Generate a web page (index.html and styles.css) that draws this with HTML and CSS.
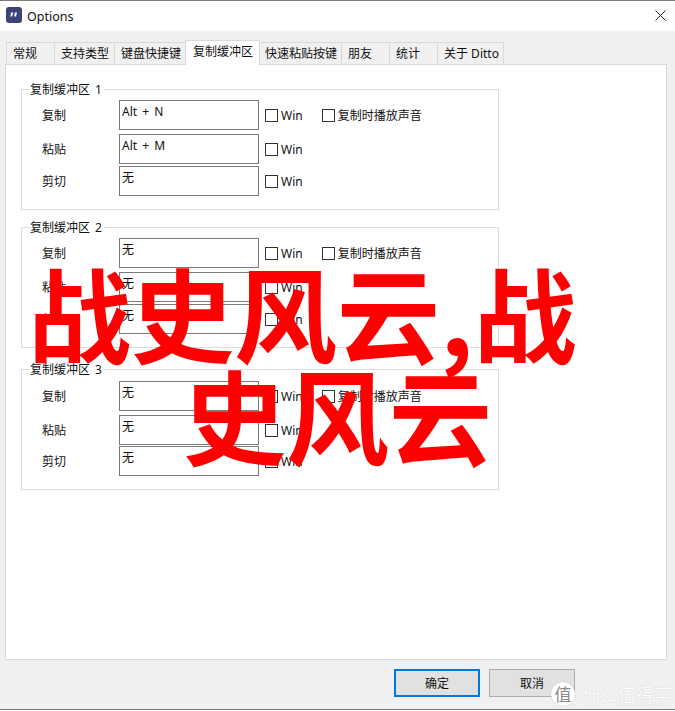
FILE: index.html
```html
<!DOCTYPE html>
<html lang="zh-CN">
<head>
    <meta charset="UTF-8">
    <meta name="viewport" content="width=device-width, initial-scale=1.0">
    <title>Options</title>
    <link rel="stylesheet" href="styles.css">
</head>
<body>
    <div class="window">
        <div class="titlebar">
            <svg class="app-icon" width="16" height="16" viewBox="0 0 16 16">
                <rect width="16" height="16" rx="3" fill="#3b4477"/>
                <path d="M5 5.5h2.2L6.2 9.5H4.4zM8.8 5.5H11L10 9.5H8.2z" fill="#fff"/>
            </svg>
            <span class="title">Options</span>
            <svg class="close" width="11" height="11" viewBox="0 0 11 11">
                <path d="M.5.5l10 10M10.5.5l-10 10" stroke="#222" stroke-width="1" fill="none"/>
            </svg>
        </div>

        <div class="body">
            <div class="tabs">
                <div class="tab tab-w48">常规</div>
                <div class="tab tab-w60">支持类型</div>
                <div class="tab tab-w71">键盘快捷键</div>
                <div class="tab tab-w75 active">复制缓冲区</div>
                <div class="tab tab-w82">快速粘贴按键</div>
                <div class="tab tab-w48">朋友</div>
                <div class="tab tab-w48">统计</div>
                <div class="tab tab-w67">关于 Ditto</div>
            </div>

            <div class="panel">
                <fieldset class="group">
                    <legend>复制缓冲区 1</legend>
                    <div class="row">
                        <span class="row-label">复制</span>
                        <div class="hotkey">Alt + N</div>
                        <label class="check"><i class="box"></i>Win</label>
                        <label class="check sound"><i class="box"></i>复制时播放声音</label>
                    </div>
                    <div class="row">
                        <span class="row-label">粘贴</span>
                        <div class="hotkey">Alt + M</div>
                        <label class="check"><i class="box"></i>Win</label>
                    </div>
                    <div class="row tight">
                        <span class="row-label">剪切</span>
                        <div class="hotkey">无</div>
                        <label class="check"><i class="box"></i>Win</label>
                    </div>
                </fieldset>

                <fieldset class="group">
                    <legend>复制缓冲区 2</legend>
                    <div class="row">
                        <span class="row-label">复制</span>
                        <div class="hotkey">无</div>
                        <label class="check"><i class="box"></i>Win</label>
                        <label class="check sound"><i class="box"></i>复制时播放声音</label>
                    </div>
                    <div class="row">
                        <span class="row-label">粘贴</span>
                        <div class="hotkey">无</div>
                        <label class="check"><i class="box"></i>Win</label>
                    </div>
                    <div class="row tight">
                        <span class="row-label">剪切</span>
                        <div class="hotkey">无</div>
                        <label class="check"><i class="box"></i>Win</label>
                    </div>
                </fieldset>

                <fieldset class="group third">
                    <legend>复制缓冲区 3</legend>
                    <div class="row">
                        <span class="row-label">复制</span>
                        <div class="hotkey">无</div>
                        <label class="check"><i class="box"></i>Win</label>
                        <label class="check sound"><i class="box"></i>复制时播放声音</label>
                    </div>
                    <div class="row">
                        <span class="row-label">粘贴</span>
                        <div class="hotkey">无</div>
                        <label class="check"><i class="box"></i>Win</label>
                    </div>
                    <div class="row closer">
                        <span class="row-label">剪切</span>
                        <div class="hotkey">无</div>
                        <label class="check"><i class="box"></i>Win</label>
                    </div>
                </fieldset>
            </div>

            <div class="actions">
                <button class="btn primary">确定</button>
                <button class="btn">取消</button>
            </div>
        </div>
    </div>

    <div class="headline">
        <div class="line-one">战史风云,战</div>
        <div class="line-two">史风云</div>
    </div>

    <div class="watermark">
        <span class="wm-badge">值</span>
        <span class="wm-text">什么值得买</span>
    </div>
</body>
</html>
```

FILE: styles.css
```css
html, body {
    margin: 0;
    padding: 0;
}
body {
    width: 675px;
    height: 711px;
    overflow: hidden;
    position: relative;
    background: white;
    font-family: "Noto Sans", "Noto Sans CJK SC", sans-serif;
    font-size: 12px;
    color: #111;
    word-spacing: 2px;
}
.window {
    height: 708px;
    border-top: 1px solid #7a7a7a;
    border-bottom: 1px solid #7a7a7a;
    display: flex;
    flex-direction: column;
}
.titlebar {
    height: 30px;
    background: white;
    display: flex;
    align-items: center;
    padding: 0 9px 0 6px;
    flex-shrink: 0;
}
.app-icon {
    margin-bottom: 2px;
}
.title {
    margin-left: 5px;
    font-size: 12.5px;
    flex: 1;
}
.close {
    margin-bottom: 1px;
}
.body {
    flex: 1;
    background: #f0f0f0;
    padding: 9px 8px 0 5px;
    display: flex;
    flex-direction: column;
}
.tabs {
    display: flex;
    height: 24px;
    align-items: flex-end;
    padding-left: 1px;
    position: relative;
    z-index: 1;
}
.tab {
    height: 22px;
    box-sizing: border-box;
    border: 1px solid #d9d9d9;
    border-right: 0;
    border-bottom: 0;
    display: flex;
    align-items: center;
    line-height: 1;
    padding: 1px 0 0 6px;
}
.tab-w48 { width: 48px; }
.tab-w60 { width: 60px; }
.tab-w71 { width: 71px; }
.tab-w75 { width: 75px; }
.tab-w82 { width: 82px; padding-left: 5px; }
.tab-w67 { width: 67px; border-right: 1px solid #d9d9d9; word-spacing: 0; }
.tab.active {
    height: 25px;
    margin-bottom: -1px;
    background: white;
    border-right: 1px solid #d9d9d9;
    margin-right: -1px;
    padding: 0 0 2px 7px;
}
.panel {
    height: 596px;
    box-sizing: border-box;
    background: white;
    border: 1px solid #d9d9d9;
    padding: 16px 0 0 15px;
}
.group {
    width: 478px;
    height: 129px;
    box-sizing: border-box;
    margin: 0 0 9px;
    padding: 0 0 0 20px;
    border: 1px solid #dcdcdc;
    min-inline-size: 0;
}
.group.third {
    margin-top: 13px;
}
.group legend {
    margin-left: -12px;
    padding: 1px 2px 0 0;
    line-height: 15px;
}
.row {
    display: flex;
    align-items: center;
    height: 30px;
    margin-bottom: 4px;
}
.row:first-of-type {
    margin-top: 3px;
}
.third .row:first-of-type {
    margin-top: 4px;
}
.row.tight {
    margin-top: -2px;
}
.row.closer {
    margin-top: -3px;
}
.row-label {
    width: 77px;
}
.hotkey {
    width: 140px;
    height: 30px;
    box-sizing: border-box;
    border: 1px solid #7a7a7a;
    padding: 3px 2px 0;
    line-height: 16px;
    background: white;
}
.check {
    display: flex;
    align-items: center;
    margin-left: 6px;
}
.check.sound {
    margin-left: 19px;
}
.box {
    width: 13px;
    height: 13px;
    box-sizing: border-box;
    border: 1px solid #333;
    margin-right: 3px;
    background: white;
}
.actions {
    display: flex;
    justify-content: flex-end;
    gap: 9px;
    padding: 9px 92px 0 0;
}
.btn {
    width: 86px;
    height: 28px;
    box-sizing: border-box;
    border: 1px solid #adadad;
    background: #e1e1e1;
    font-family: inherit;
    font-size: 12px;
    color: #111;
    padding: 0;
}
.btn.primary {
    border: 2px solid #0078d7;
}
/* 叠在截图上的大字 */
.headline {
    position: absolute;
    left: 0;
    top: 0;
    width: 675px;
    font-family: "Noto Sans CJK SC", sans-serif;
    font-weight: 700;
    font-size: 103px;
    line-height: 103px;
    color: #ff0000;
    white-space: nowrap;
    word-spacing: 0;
}
.line-one {
    position: absolute;
    left: 28px;
    top: 260px;
}
.line-two {
    position: absolute;
    left: 183px;
    top: 362px;
}
.watermark {
    position: absolute;
    left: 551px;
    top: 682px;
    display: flex;
    align-items: center;
    gap: 7px;
    color: white;
    word-spacing: 0;
}
.wm-badge {
    width: 24px;
    height: 24px;
    border-radius: 50%;
    background: white;
    color: #8a8a8a;
    font-family: "Noto Sans CJK SC", sans-serif;
    font-size: 17px;
    line-height: 24px;
    text-align: center;
    box-shadow: 0 0 1px rgba(0,0,0,0.3);
}
.wm-text {
    font-size: 18px;
    line-height: 24px;
    font-family: "Noto Sans CJK SC", sans-serif;
    opacity: 0.9;
    text-shadow: 0 0 1px rgba(0,0,0,0.2);
}
```
